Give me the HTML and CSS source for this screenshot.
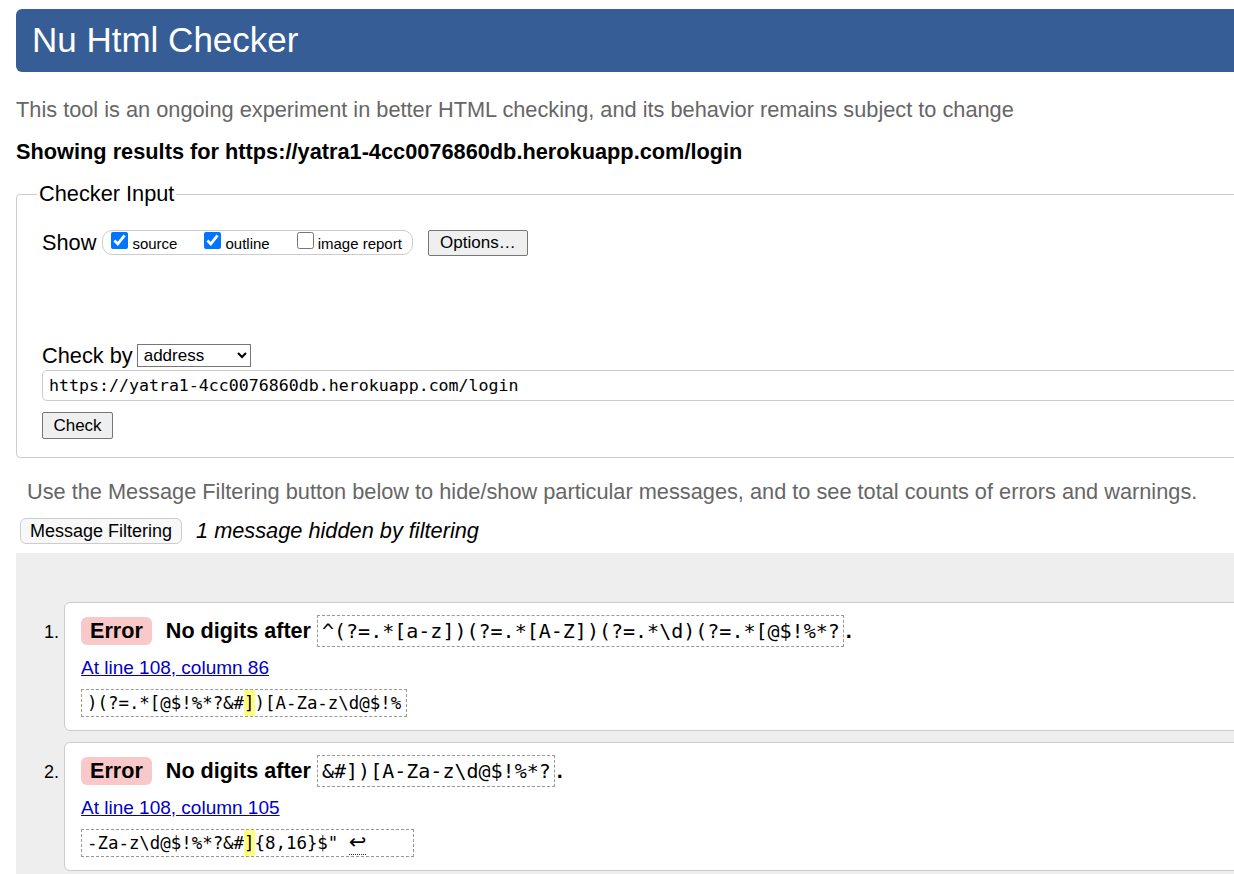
FILE: index.html
```html
<!DOCTYPE html>
<html lang="en">
<head>
<meta charset="utf-8">
<title>Nu Html Checker</title>
<link rel="stylesheet" href="styles.css">
</head>
<body>
<div class="page">
  <h1 class="banner">Nu Html Checker</h1>
  <p class="intro">This tool is an ongoing experiment in better HTML checking, and its behavior remains subject to change</p>
  <p class="showing">Showing results for https://yatra1-4cc0076860db.herokuapp.com/login</p>

  <form class="form">
    <fieldset class="checker">
      <legend class="legend">Checker Input</legend>
      <div class="show-row">
        <span class="label">Show</span>
        <span class="opts">
          <label class="opt"><input type="checkbox" checked><span>source</span></label>
          <label class="opt"><input type="checkbox" checked><span>outline</span></label>
          <label class="opt"><input type="checkbox"><span>image report</span></label>
        </span>
        <button type="button" class="btn btn-options">Options…</button>
      </div>
      <div class="checkby-row">
        <span class="label">Check by</span>
        <select class="select"><option>address</option></select>
      </div>
      <input class="url" type="text" value="https://yatra1-4cc0076860db.herokuapp.com/login">
      <button type="button" class="btn btn-check">Check</button>
    </fieldset>
  </form>

  <p class="note">Use the Message Filtering button below to hide/show particular messages, and to see total counts of errors and warnings.</p>
  <div class="filter-row">
    <button type="button" class="btn-filter">Message Filtering</button>
    <em class="hidden-count">1 message hidden by filtering</em>
  </div>

  <div class="results">
    <ol class="messages">
      <li class="msg">
        <p class="msg-head"><strong class="badge">Error</strong><span class="msg-text">No digits after</span><code class="code">^(?=.*[a-z])(?=.*[A-Z])(?=.*\d)(?=.*[@$!%*?</code><span class="dot">.</span></p>
        <p class="loc"><a href="#l108c86" class="loc-link">At line 108, column 86</a></p>
        <div class="extract">)(?=.*[@$!%*?&amp;#<mark class="hl">]</mark>)[A-Za-z\d@$!%</div>
      </li>
      <li class="msg">
        <p class="msg-head"><strong class="badge">Error</strong><span class="msg-text">No digits after</span><code class="code">&amp;#])[A-Za-z\d@$!%*?</code><span class="dot">.</span></p>
        <p class="loc"><a href="#l108c105" class="loc-link">At line 108, column 105</a></p>
        <div class="extract">-Za-z\d@$!%*?&amp;#<mark class="hl">]</mark>{8,16}$" <span class="lf">↩</span>    </div>
      </li>
    </ol>
  </div>
</div>
</body>
</html>
```

FILE: styles.css
```css
html {
  overflow: hidden;
}

body {
  margin: 0;
  font-family: "Liberation Sans", Arial, sans-serif;
  color: #000;
  background: #fff;
}

.page {
  width: 1500px;
  padding: 9px 0 0 16px;
}

.banner {
  margin: 0;
  height: 63px;
  line-height: 62px;
  padding-left: 16px;
  background: #365d95;
  color: #fff;
  font-size: 35px;
  font-weight: normal;
  border-radius: 6px;
}

.intro {
  margin: 26px 0 0;
  font-size: 21.75px;
  line-height: 24px;
  color: #666;
}

.showing {
  margin: 18px 0 0;
  font-size: 21.75px;
  line-height: 24px;
  font-weight: bold;
}

.form {
  margin: 0;
}

.checker {
  margin: 18px 0 0;
  padding: 0 0 18px 25px;
  border: 1px solid #ccc;
  border-radius: 4px;
  min-width: 0;
}

.legend {
  font-size: 21.75px;
  line-height: 24px;
  padding: 0 2px;
  margin-left: -5px;
}

.label {
  font-size: 21.75px;
  line-height: 24px;
}

.show-row {
  display: flex;
  align-items: center;
  height: 27px;
  margin-top: 23px;
}

.opts {
  display: flex;
  align-items: center;
  height: 23px;
  margin-left: 6px;
  padding: 0 10px 0 8px;
  border: 1px solid #ccc;
  border-radius: 10px;
}

.opt {
  display: flex;
  align-items: center;
  font-size: 15px;
  margin-right: 27px;
}

.opt:last-child {
  margin-right: 0;
}

.opt input {
  width: 17px;
  height: 17px;
  margin: -4px 4px 0 0;
}

.opt span {
  line-height: 18px;
  position: relative;
  top: 1px;
}

.btn {
  font-family: "Liberation Sans", Arial, sans-serif;
  font-size: 17px;
  background: #efefef;
  border: 1px solid #767676;
  border-radius: 2px;
  color: #000;
  padding: 0;
}

.btn-options {
  margin-left: 15px;
  width: 100px;
  height: 26px;
}

.checkby-row {
  display: flex;
  align-items: center;
  height: 23px;
  margin-top: 88px;
}

.select {
  margin-left: 4px;
  width: 114px;
  height: 23px;
  font-family: "Liberation Sans", Arial, sans-serif;
  font-size: 17px;
  border: 1px solid #767676;
  border-radius: 0;
  background: #fff;
  padding: 0 0 0 2px;
}

.url {
  display: block;
  box-sizing: border-box;
  margin-top: 3px;
  width: 1400px;
  height: 31px;
  padding: 0 6px;
  border: 1px solid #ccc;
  border-radius: 5px;
  font-family: "DejaVu Sans Mono", "Liberation Mono", monospace;
  font-size: 16.6px;
  color: #000;
}

.btn-check {
  display: block;
  margin-top: 11px;
  width: 71px;
  height: 27px;
}

.note {
  margin: 22px 0 0;
  padding-left: 11px;
  font-size: 21.75px;
  line-height: 24px;
  color: #666;
}

.filter-row {
  display: flex;
  align-items: center;
  margin-top: 14px;
  padding-left: 4px;
}

.btn-filter {
  height: 26px;
  width: 162px;
  padding: 0;
  font-family: "Liberation Sans", Arial, sans-serif;
  font-size: 18px;
  color: #000;
  background: #f8f8f8;
  border: 1px solid #ccc;
  border-radius: 6px;
}

.hidden-count {
  margin-left: 14px;
  font-size: 21.75px;
  line-height: 24px;
}

.results {
  margin-top: 9px;
  background: #eee;
  padding: 49px 0 40px;
}

.messages {
  margin: 0;
  padding: 0 0 0 48px;
  font-size: 18px;
}

.msg {
  background: #fff;
  border: 1px solid #ccc;
  border-radius: 6px;
  padding: 12px 16px 13px;
  margin-bottom: 11px;
}

.msg-head {
  margin: 0;
  font-size: 21.6px;
  line-height: 28px;
  white-space: nowrap;
}

.badge {
  display: inline-block;
  padding: 0 9px;
  line-height: 28px;
  background: #f9c9c9;
  border-radius: 6px;
  font-weight: bold;
}

.msg-text {
  margin-left: 14px;
  font-weight: bold;
}

.code {
  display: inline-block;
  margin-left: 6px;
  padding: 0 3px 0 4px;
  line-height: 30px;
  border: 1px dashed #999;
  font-family: "DejaVu Sans Mono", "Liberation Mono", monospace;
  font-size: 20px;
}

.dot {
  margin-left: 2px;
  font-weight: bold;
}

.loc {
  margin: 10px 0 0;
  line-height: 22px;
}

.loc-link {
  color: #0000cc;
  font-size: 19px;
}

.extract {
  margin-top: 10px;
  width: fit-content;
  padding: 0 5px;
  line-height: 26px;
  border: 1px dashed #999;
  font-family: "DejaVu Sans Mono", "Liberation Mono", monospace;
  font-size: 17.4px;
  white-space: pre;
}

.hl {
  background: #ffff80;
  color: #000;
  padding: 3px 0;
}

.lf {
  font-family: "DejaVu Sans", sans-serif;
  font-size: 21px;
  line-height: 20px;
  border-bottom: 1px dotted #333;
}
```
